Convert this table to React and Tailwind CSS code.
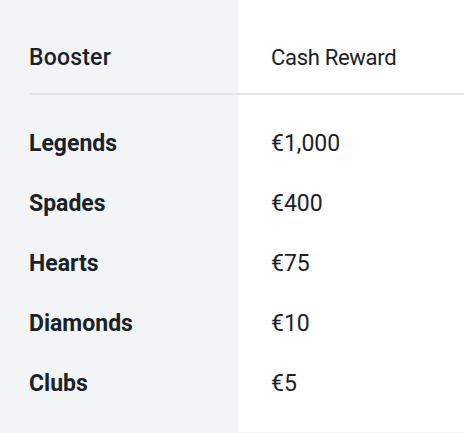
export default function App() {
  const rows = [
    ["Legends", "€1,000"],
    ["Spades", "€400"],
    ["Hearts", "€75"],
    ["Diamonds", "€10"],
    ["Clubs", "€5"],
  ];
  return (
    <div
      className="w-[464px] h-[433px] bg-[#f3f4f6] text-[#1a2228] text-[22px] leading-[28px]"
      style={{ fontFamily: "Roboto, 'Liberation Sans', sans-serif" }}
    >
      <div className="flex h-[93px]">
        <div className="w-[238px] pl-[29px] pt-[44px] text-[23px] font-medium tracking-[0.2px]">Booster</div>
        <div className="flex-1 bg-white pl-[33px] pt-[44px] tracking-[-0.3px]">Cash Reward</div>
      </div>
      <div className="flex h-[2px]">
        <div className="w-[30px]" />
        <div className="flex-1 bg-[#e0e5e7]" />
      </div>
      <div className="flex">
        <div className="w-[238px] pl-[29px] pt-[35px] pb-[34px] flex flex-col gap-[32px] font-bold text-[23px]">
          {rows.map(([n]) => (
            <div key={n}>{n}</div>
          ))}
        </div>
        <div className="flex-1 bg-white pl-[33px] pt-[35px] pb-[34px] flex flex-col gap-[32px] text-[23px]">
          {rows.map(([n, v]) => (
            <div key={n}>{v}</div>
          ))}
        </div>
      </div>
    </div>
  );
}
